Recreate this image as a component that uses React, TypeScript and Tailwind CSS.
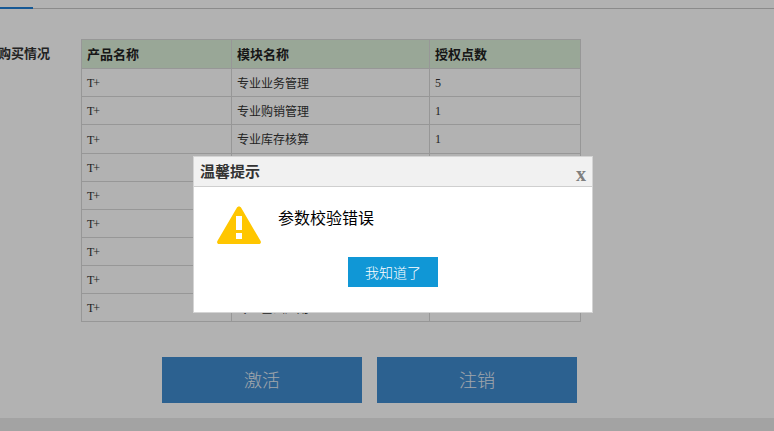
import React from 'react';

const cjk = "font-['Noto_Sans_CJK_SC','Noto_Sans',sans-serif]";

const rows = [
  ['专业业务管理', '5'],
  ['专业购销管理', '1'],
  ['专业库存核算', '1'],
  ['专业往来管理', '1'],
  ['专业出纳管理', '1'],
  ['专业总账管理', '1'],
  ['专业报表管理', '1'],
  ['专业工资管理', '1'],
  ['专业基础应用', '1'],
];

function WarningIcon() {
  return (
    <svg width="46" height="40" viewBox="0 0 46 40">
      <path d="M23 1.5 C24 1.5 24.8 2 25.3 3 L44.6 36 C45.4 37.6 44.6 39 42.8 39 L3.2 39 C1.4 39 .6 37.6 1.4 36 L20.7 3 C21.2 2 22 1.5 23 1.5 Z" fill="#ffc600" />
      <rect x="20" y="11" width="6" height="14" fill="#fff" />
      <rect x="20" y="28" width="6" height="6" fill="#fff" />
    </svg>
  );
}

export default function App() {
  return (
    <div className={`relative flex h-[431px] w-[774px] flex-col overflow-hidden bg-white ${cjk}`}>
      <div className="h-[9px] shrink-0 border-b border-[#c8c8c8]">
        <div className="mt-[7px] h-[2px] w-[33px] bg-[#1f7fd6]" />
      </div>

      <div className="flex flex-1 pt-[30px]">
        <div className="flex w-[81px] shrink-0 justify-end pr-[31px] pt-[5px]">
          <span className="whitespace-nowrap text-[13px] leading-[18px] font-bold text-[#333]">购买情况</span>
        </div>
        <div>
          <table className="w-[500px] table-fixed border-collapse text-[12px] text-[#333]">
            <thead>
              <tr className="h-[29px] bg-[#dcf0d9] text-left text-[13px] text-[#222]">
                <th className="w-[150px] border border-[#d8d8d8] pl-[5px] font-bold">产品名称</th>
                <th className="w-[198px] border border-[#d8d8d8] pl-[5px] font-bold">模块名称</th>
                <th className="border border-[#d8d8d8] pl-[5px] font-bold">授权点数</th>
              </tr>
            </thead>
            <tbody>
              {rows.map(([name, points], i) => (
                <tr key={name} className={i === 2 ? 'h-[29px]' : 'h-[28px]'}>
                  <td className="border border-[#d8d8d8] pl-[5px] pt-[1px] font-['Liberation_Serif',serif] text-[12px] tracking-[-1px]">T+</td>
                  <td className="border border-[#d8d8d8] pl-[5px]">{name}</td>
                  <td className="border border-[#d8d8d8] pl-[5px] font-['Liberation_Serif',serif]">{points}</td>
                </tr>
              ))}
            </tbody>
          </table>
          <div className="ml-[81px] mt-[35px] flex gap-[15px]">
            <button className="h-[46px] w-[200px] bg-[#408bce] pb-[2px] text-[18px] font-light text-[#e6eef6]">激活</button>
            <button className="h-[46px] w-[200px] bg-[#408bce] pb-[2px] text-[18px] font-light text-[#e6eef6]">注销</button>
          </div>
        </div>
      </div>

      <div className="h-[13px] shrink-0 bg-[#eaeaea]" />

      {/* dim layer and dialog */}
      <div className="absolute inset-0 bg-black/30" />
      <div className="absolute left-[193px] top-[156px] w-[400px] border border-[#d4d4d4] bg-white">
        <div className="flex h-[30px] items-center justify-between border-b border-[#cfcfcf] bg-[#f1f1f1] pl-[6px] pr-[6px]">
          <span className="text-[15px] font-bold text-[#333]">温馨提示</span>
          <span className="mt-[5px] font-['Liberation_Serif',serif] text-[20px] leading-none font-bold text-[#808080]">x</span>
        </div>
        <div className="flex h-[125px] flex-col">
          <div className="flex pl-[22px] pt-[18px]">
            <WarningIcon />
            <span className="ml-[16px] mt-[1px] text-[16px] leading-[22px] text-black">参数校验错误</span>
          </div>
          <div className="mt-[12px] flex justify-center px-[8px]">
            <button className="h-[30px] w-[90px] bg-[#1097d6] text-[14px] font-light text-white">我知道了</button>
          </div>
        </div>
      </div>
    </div>
  );
}
